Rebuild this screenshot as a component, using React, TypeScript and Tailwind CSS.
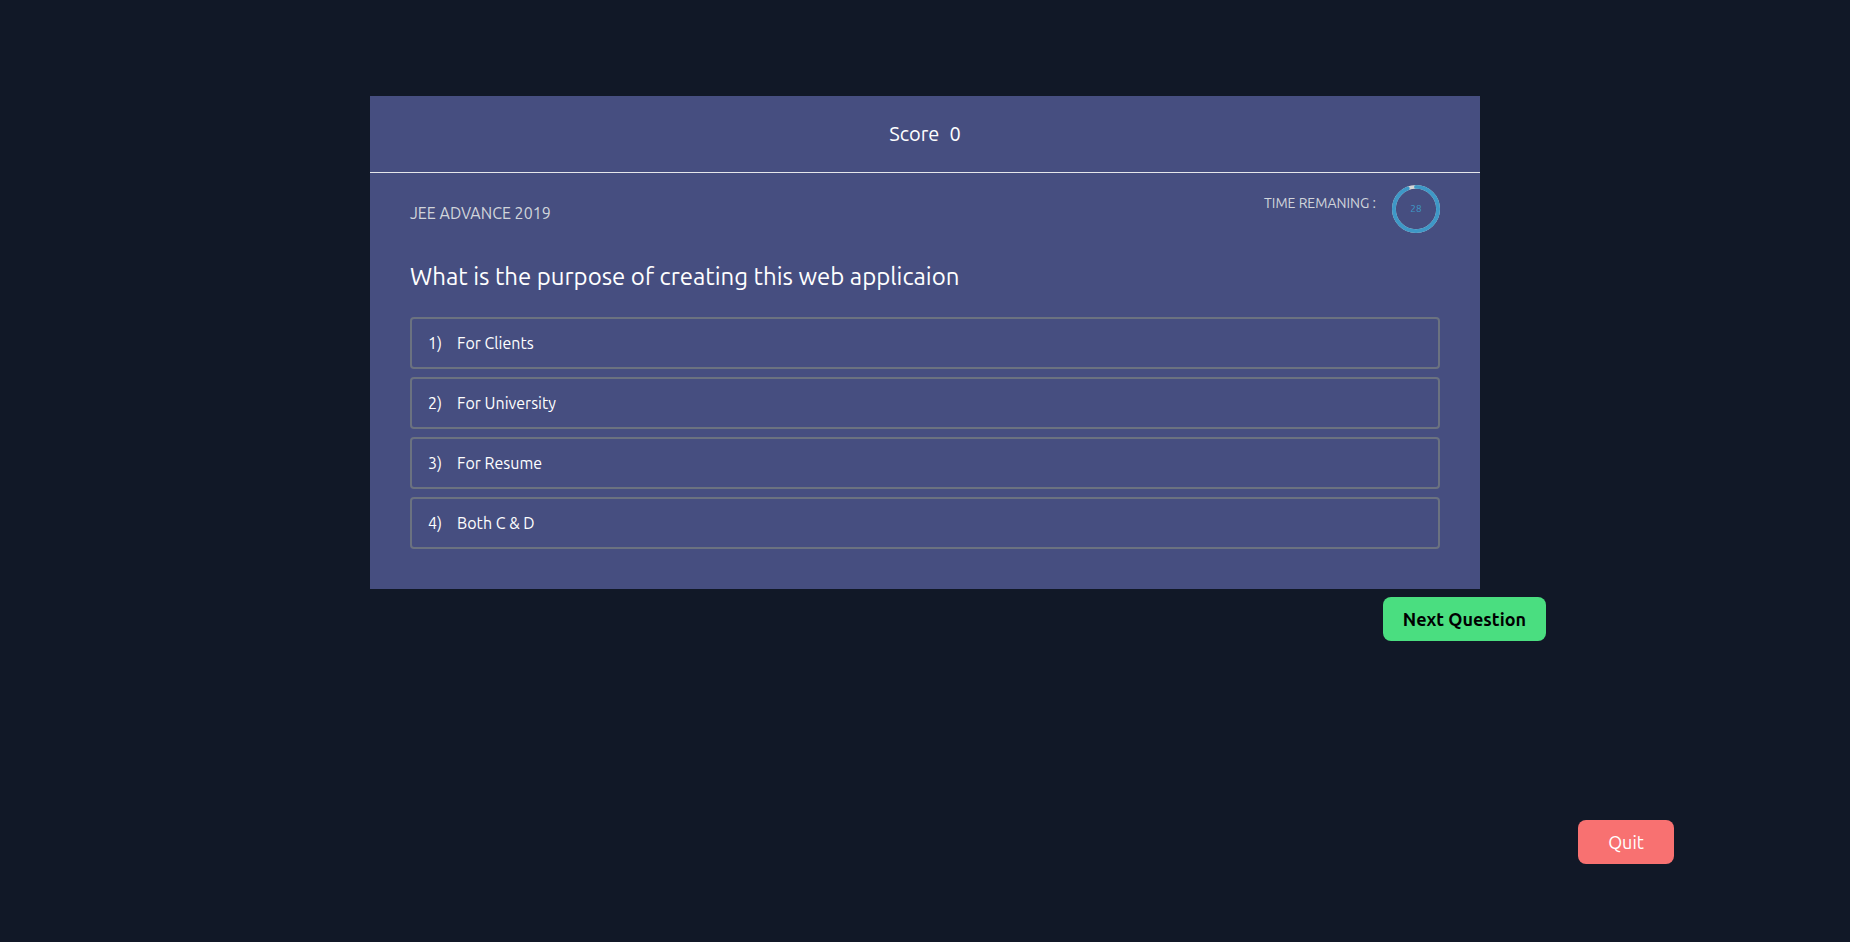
const options = ['For Clients', 'For University', 'For Resume', 'Both C & D'];

const TOTAL_SECONDS = 30;
const RADIUS = 46;
const CIRCUMFERENCE = 2 * Math.PI * RADIUS;

function Timer({ seconds }: { seconds: number }) {
  const filled = (seconds / TOTAL_SECONDS) * CIRCUMFERENCE;
  return (
    <div className="grid size-12 place-items-center">
      <svg viewBox="0 0 100 100" className="col-start-1 row-start-1 size-12" aria-hidden="true">
        <circle cx="50" cy="50" r={RADIUS} fill="none" stroke="#d6d6d6" strokeWidth="8" />
        <circle
          cx="50"
          cy="50"
          r={RADIUS}
          fill="none"
          stroke="#3e98c7"
          strokeWidth="8"
          strokeLinecap="round"
          strokeDasharray={`${filled} ${CIRCUMFERENCE}`}
          transform="rotate(-90 50 50)"
        />
      </svg>
      <span className="col-start-1 row-start-1 text-[10px] leading-3 text-[#3e98c7]">{seconds}</span>
    </div>
  );
}

export default function App() {
  return (
    <main className="flex min-h-screen flex-col bg-[#111827] pt-24 pb-[78px] font-['Ubuntu','Noto_Sans',sans-serif] text-white">
      <section className="mx-auto w-3/5 bg-[#464E80]">
        <header className="flex justify-center gap-2.5 border-b border-[#e5e7eb] p-6 text-xl">
          <span>Score</span>
          <span>0</span>
        </header>
        <div className="px-10 pt-3 pb-10">
          <div className="flex items-start justify-between text-[#d1d5db]">
            <p className="pt-4 text-base">JEE ADVANCE 2019</p>
            <div className="flex gap-4">
              <p className="pt-2 text-sm">TIME REMANING :</p>
              <Timer seconds={28} />
            </div>
          </div>
          <h1 className="mt-7 text-2xl">What is the purpose of creating this web applicaion</h1>
          <ol className="mt-6 flex flex-col gap-2">
            {options.map((option, i) => (
              <li key={option}>
                <button
                  type="button"
                  className="flex w-full gap-[15px] rounded border-2 border-[#6b7280] px-4 py-3 text-left text-base"
                >
                  <span>{i + 1})</span>
                  <span>{option}</span>
                </button>
              </li>
            ))}
          </ol>
        </div>
      </section>
      <button
        type="button"
        className="mt-2 mr-[304px] self-end rounded-lg bg-[#4ade80] px-5 py-2 text-lg font-bold text-black"
      >
        Next Question
      </button>
      <button type="button" className="mt-auto mr-44 w-24 self-end rounded-lg bg-[#f87171] py-2 text-lg">
        Quit
      </button>
    </main>
  );
}
